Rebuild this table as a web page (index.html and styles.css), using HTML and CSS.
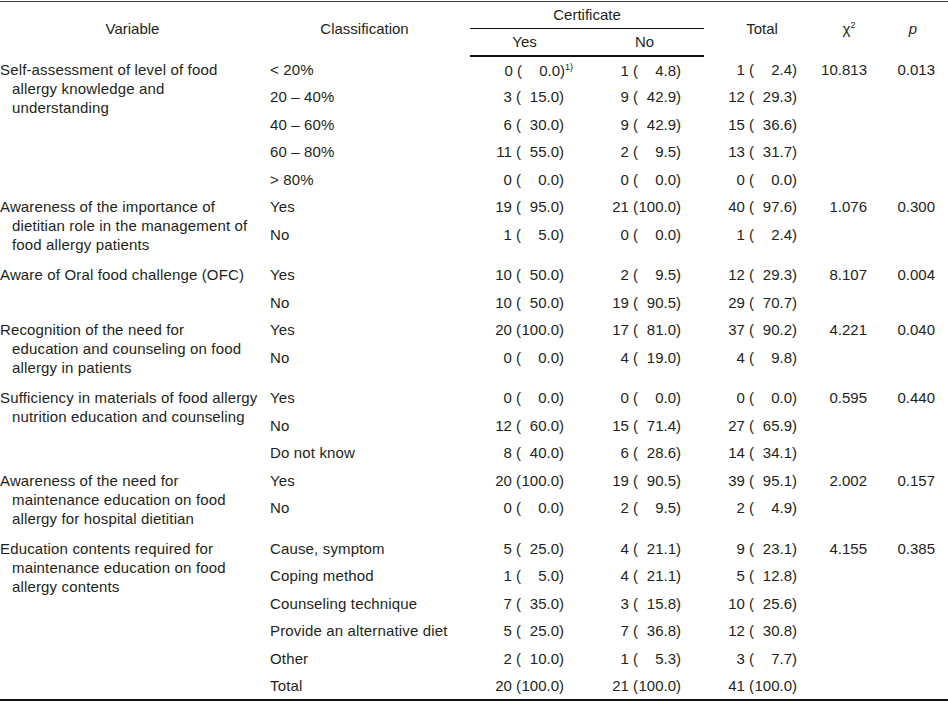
FILE: index.html
```html
<!DOCTYPE html>
<html>
<head>
<meta charset="utf-8">
<link rel="stylesheet" href="styles.css">
</head>
<body>
<div class="page">
<table class="stats">
  <colgroup>
    <col class="c-var"><col class="c-cls"><col class="c-yes"><col class="c-no"><col class="c-tot"><col class="c-chi"><col class="c-p">
  </colgroup>
  <thead>
    <tr class="h1">
      <th rowspan="2">Variable</th>
      <th rowspan="2" class="h-cls">Classification</th>
      <th colspan="2" class="cert">Certificate</th>
      <th rowspan="2">Total</th>
      <th rowspan="2">χ<sup>2</sup></th>
      <th rowspan="2"><i>p</i></th>
    </tr>
    <tr class="h2">
      <th class="sub-yes">Yes</th>
      <th class="sub-no">No</th>
    </tr>
  </thead>
  <tbody>
    <tr>
      <td rowspan="5" class="var"><div class="hang">Self-assessment of level of food<br>allergy knowledge and<br>understanding</div></td>
      <td class="cls">&lt; 20%</td>
      <td class="num"><span class="n">0</span> (<span class="pc">0.0</span>)<sup class="fn">1)</sup></td>
      <td class="num"><span class="n">1</span> (<span class="pc">4.8</span>)</td>
      <td class="num"><span class="n">1</span> (<span class="pc">2.4</span>)</td>
      <td class="chi">10.813</td>
      <td class="pv">0.013</td>
    </tr>
    <tr>
      <td class="cls">20 – 40%</td>
      <td class="num"><span class="n">3</span> (<span class="pc">15.0</span>)</td>
      <td class="num"><span class="n">9</span> (<span class="pc">42.9</span>)</td>
      <td class="num"><span class="n">12</span> (<span class="pc">29.3</span>)</td>
      <td class="chi"></td><td class="pv"></td>
    </tr>
    <tr>
      <td class="cls">40 – 60%</td>
      <td class="num"><span class="n">6</span> (<span class="pc">30.0</span>)</td>
      <td class="num"><span class="n">9</span> (<span class="pc">42.9</span>)</td>
      <td class="num"><span class="n">15</span> (<span class="pc">36.6</span>)</td>
      <td class="chi"></td><td class="pv"></td>
    </tr>
    <tr>
      <td class="cls">60 – 80%</td>
      <td class="num"><span class="n">11</span> (<span class="pc">55.0</span>)</td>
      <td class="num"><span class="n">2</span> (<span class="pc">9.5</span>)</td>
      <td class="num"><span class="n">13</span> (<span class="pc">31.7</span>)</td>
      <td class="chi"></td><td class="pv"></td>
    </tr>
    <tr>
      <td class="cls">&gt; 80%</td>
      <td class="num"><span class="n">0</span> (<span class="pc">0.0</span>)</td>
      <td class="num"><span class="n">0</span> (<span class="pc">0.0</span>)</td>
      <td class="num"><span class="n">0</span> (<span class="pc">0.0</span>)</td>
      <td class="chi"></td><td class="pv"></td>
    </tr>

    <tr>
      <td rowspan="2" class="var"><div class="hang">Awareness of the importance of<br>dietitian role in the management of<br>food allergy patients</div></td>
      <td class="cls">Yes</td>
      <td class="num"><span class="n">19</span> (<span class="pc">95.0</span>)</td>
      <td class="num"><span class="n">21</span> (<span class="pc">100.0</span>)</td>
      <td class="num"><span class="n">40</span> (<span class="pc">97.6</span>)</td>
      <td class="chi">1.076</td>
      <td class="pv">0.300</td>
    </tr>
    <tr class="tall">
      <td class="cls">No</td>
      <td class="num"><span class="n">1</span> (<span class="pc">5.0</span>)</td>
      <td class="num"><span class="n">0</span> (<span class="pc">0.0</span>)</td>
      <td class="num"><span class="n">1</span> (<span class="pc">2.4</span>)</td>
      <td class="chi"></td><td class="pv"></td>
    </tr>

    <tr>
      <td rowspan="2" class="var"><div class="hang">Aware of Oral food challenge (OFC)</div></td>
      <td class="cls">Yes</td>
      <td class="num"><span class="n">10</span> (<span class="pc">50.0</span>)</td>
      <td class="num"><span class="n">2</span> (<span class="pc">9.5</span>)</td>
      <td class="num"><span class="n">12</span> (<span class="pc">29.3</span>)</td>
      <td class="chi">8.107</td>
      <td class="pv">0.004</td>
    </tr>
    <tr>
      <td class="cls">No</td>
      <td class="num"><span class="n">10</span> (<span class="pc">50.0</span>)</td>
      <td class="num"><span class="n">19</span> (<span class="pc">90.5</span>)</td>
      <td class="num"><span class="n">29</span> (<span class="pc">70.7</span>)</td>
      <td class="chi"></td><td class="pv"></td>
    </tr>

    <tr>
      <td rowspan="2" class="var"><div class="hang">Recognition of the need for<br>education and counseling on food<br>allergy in patients</div></td>
      <td class="cls">Yes</td>
      <td class="num"><span class="n">20</span> (<span class="pc">100.0</span>)</td>
      <td class="num"><span class="n">17</span> (<span class="pc">81.0</span>)</td>
      <td class="num"><span class="n">37</span> (<span class="pc">90.2</span>)</td>
      <td class="chi">4.221</td>
      <td class="pv">0.040</td>
    </tr>
    <tr class="tall">
      <td class="cls">No</td>
      <td class="num"><span class="n">0</span> (<span class="pc">0.0</span>)</td>
      <td class="num"><span class="n">4</span> (<span class="pc">19.0</span>)</td>
      <td class="num"><span class="n">4</span> (<span class="pc">9.8</span>)</td>
      <td class="chi"></td><td class="pv"></td>
    </tr>

    <tr>
      <td rowspan="3" class="var"><div class="hang">Sufficiency in materials of food allergy<br>nutrition education and counseling</div></td>
      <td class="cls">Yes</td>
      <td class="num"><span class="n">0</span> (<span class="pc">0.0</span>)</td>
      <td class="num"><span class="n">0</span> (<span class="pc">0.0</span>)</td>
      <td class="num"><span class="n">0</span> (<span class="pc">0.0</span>)</td>
      <td class="chi">0.595</td>
      <td class="pv">0.440</td>
    </tr>
    <tr>
      <td class="cls">No</td>
      <td class="num"><span class="n">12</span> (<span class="pc">60.0</span>)</td>
      <td class="num"><span class="n">15</span> (<span class="pc">71.4</span>)</td>
      <td class="num"><span class="n">27</span> (<span class="pc">65.9</span>)</td>
      <td class="chi"></td><td class="pv"></td>
    </tr>
    <tr>
      <td class="cls">Do not know</td>
      <td class="num"><span class="n">8</span> (<span class="pc">40.0</span>)</td>
      <td class="num"><span class="n">6</span> (<span class="pc">28.6</span>)</td>
      <td class="num"><span class="n">14</span> (<span class="pc">34.1</span>)</td>
      <td class="chi"></td><td class="pv"></td>
    </tr>

    <tr>
      <td rowspan="2" class="var"><div class="hang">Awareness of the need for<br>maintenance education on food<br>allergy for hospital dietitian</div></td>
      <td class="cls">Yes</td>
      <td class="num"><span class="n">20</span> (<span class="pc">100.0</span>)</td>
      <td class="num"><span class="n">19</span> (<span class="pc">90.5</span>)</td>
      <td class="num"><span class="n">39</span> (<span class="pc">95.1</span>)</td>
      <td class="chi">2.002</td>
      <td class="pv">0.157</td>
    </tr>
    <tr class="tall">
      <td class="cls">No</td>
      <td class="num"><span class="n">0</span> (<span class="pc">0.0</span>)</td>
      <td class="num"><span class="n">2</span> (<span class="pc">9.5</span>)</td>
      <td class="num"><span class="n">2</span> (<span class="pc">4.9</span>)</td>
      <td class="chi"></td><td class="pv"></td>
    </tr>

    <tr>
      <td rowspan="6" class="var"><div class="hang">Education contents required for<br>maintenance education on food<br>allergy contents</div></td>
      <td class="cls">Cause, symptom</td>
      <td class="num"><span class="n">5</span> (<span class="pc">25.0</span>)</td>
      <td class="num"><span class="n">4</span> (<span class="pc">21.1</span>)</td>
      <td class="num"><span class="n">9</span> (<span class="pc">23.1</span>)</td>
      <td class="chi">4.155</td>
      <td class="pv">0.385</td>
    </tr>
    <tr>
      <td class="cls">Coping method</td>
      <td class="num"><span class="n">1</span> (<span class="pc">5.0</span>)</td>
      <td class="num"><span class="n">4</span> (<span class="pc">21.1</span>)</td>
      <td class="num"><span class="n">5</span> (<span class="pc">12.8</span>)</td>
      <td class="chi"></td><td class="pv"></td>
    </tr>
    <tr>
      <td class="cls">Counseling technique</td>
      <td class="num"><span class="n">7</span> (<span class="pc">35.0</span>)</td>
      <td class="num"><span class="n">3</span> (<span class="pc">15.8</span>)</td>
      <td class="num"><span class="n">10</span> (<span class="pc">25.6</span>)</td>
      <td class="chi"></td><td class="pv"></td>
    </tr>
    <tr>
      <td class="cls">Provide an alternative diet</td>
      <td class="num"><span class="n">5</span> (<span class="pc">25.0</span>)</td>
      <td class="num"><span class="n">7</span> (<span class="pc">36.8</span>)</td>
      <td class="num"><span class="n">12</span> (<span class="pc">30.8</span>)</td>
      <td class="chi"></td><td class="pv"></td>
    </tr>
    <tr>
      <td class="cls">Other</td>
      <td class="num"><span class="n">2</span> (<span class="pc">10.0</span>)</td>
      <td class="num"><span class="n">1</span> (<span class="pc">5.3</span>)</td>
      <td class="num"><span class="n">3</span> (<span class="pc">7.7</span>)</td>
      <td class="chi"></td><td class="pv"></td>
    </tr>
    <tr>
      <td class="cls">Total</td>
      <td class="num"><span class="n">20</span> (<span class="pc">100.0</span>)</td>
      <td class="num"><span class="n">21</span> (<span class="pc">100.0</span>)</td>
      <td class="num"><span class="n">41</span> (<span class="pc">100.0</span>)</td>
      <td class="chi"></td><td class="pv"></td>
    </tr>
  </tbody>
</table>
</div>
</body>
</html>
```

FILE: styles.css
```css
html, body {
  margin: 0;
  padding: 0;
  background: #ffffff;
}

.page {
  width: 948px;
  padding-top: 1px;
}

.stats {
  width: 948px;
  table-layout: fixed;
  border-collapse: collapse;
  font-family: "Liberation Sans", Arial, sans-serif;
  font-size: 15px;
  color: #231f20;
  border-top: 1px solid #3a3a3a;
  border-bottom: 2px solid #111;
}

.c-var { width: 265px; }
.c-cls { width: 205px; }
.c-yes { width: 117px; }
.c-no  { width: 117px; }
.c-tot { width: 116px; }
.c-chi { width: 58px; }
.c-p   { width: 70px; }

.stats th {
  font-weight: normal;
  text-align: center;
  vertical-align: middle;
  padding: 0;
  line-height: 18px;
}

.stats th.h-cls { padding-right: 6px; }

.stats thead tr.h1 { height: 27px; }
.stats thead tr.h2 { height: 27px; }
.stats thead tr.h2 th { border-bottom: 2px solid #111; }
.stats th.cert { border-bottom: 1px solid #111; }
.stats th.sub-yes { padding-right: 8px; }
.stats th.sub-no { padding-right: 2px; }

.stats th sup {
  font-size: 9px;
  line-height: 0;
  vertical-align: 6px;
}

.stats tbody tr { height: 27.5px; }
.stats tbody tr.tall { height: 40.5px; }

.stats td {
  padding: 4px 0 0 0;
  vertical-align: top;
  line-height: 19px;
  white-space: nowrap;
}

.stats td.var,
.stats td.cls {
  letter-spacing: 0.15px;
}

.hang {
  padding-left: 12px;
  text-indent: -12px;
}

.stats td.cls { padding-left: 5px; }

.stats td.num {
  text-align: right;
  padding-right: 23px;
}

.n {
  display: inline-block;
  width: 17px;
  text-align: right;
}

.pc {
  display: inline-block;
  width: 38px;
  text-align: right;
}

.fn {
  font-size: 9px;
  line-height: 0;
  vertical-align: 6px;
  margin-right: -9px;
}

.stats td.chi {
  text-align: right;
  padding-right: 11px;
}

.stats td.pv {
  text-align: right;
  padding-right: 13px;
}
```
